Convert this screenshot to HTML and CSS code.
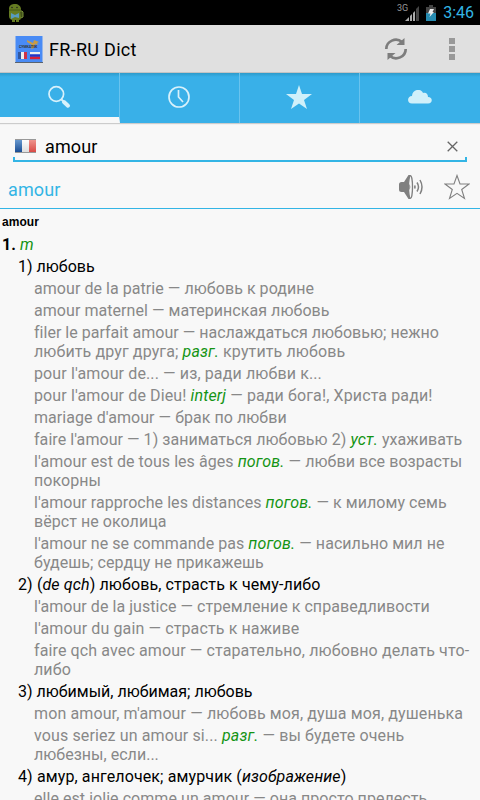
FILE: index.html
```
<!DOCTYPE html>
<html lang="ru">
<head>
<meta charset="utf-8">
<title>FR-RU Dict</title>
<link rel="stylesheet" href="styles.css">
</head>
<body>
<div class="status">
  <svg class="droid" width="16" height="20" viewBox="0 0 16 20"><path d="M1 6C1 2 4 1 7 1s6 2 6 5v9q0 2-2 2v2H8v-2H7v2H4v-2Q1 16 1 13Z" fill="#657b22"/><path d="M12 8h2l1 1v5l-2 1" fill="#405019" stroke="#78903a"/><path d="M1 7h12" stroke="#465817"/><circle cx="4" cy="4.500" r=".8" fill="#222"/><circle cx="9" cy="4.500" r=".8" fill="#222"/><path d="M3 10l4 2 4-2v5l-4-1-4 2Z" fill="#579bc0"/></svg>
  <div class="indicators">
    <span class="net">3G</span>
    <svg class="signal" width="14" height="16" viewBox="0 0 14 16"><path d="M0 16l4-4v4ZM5 11l2-2v7H5ZM8 8l2-2v10H8Z" fill="#aaa"/><path d="M11 4l3-3v15h-3Z" fill="#444"/></svg>
    <svg class="battery" width="10" height="16" viewBox="0 0 10 16"><path d="M3 0h4v2h3v6H0V2h3Z" fill="#444"/><path d="M0 8h10v8H0Z" fill="#278bb0"/><path d="M4 4h4L6.500 7H8L3.500 12 4.500 8.500H2Z" fill="#eee"/></svg>
    <span class="clock">3:46</span>
  </div>
</div>
<header class="bar">
  <svg class="logo" width="28" height="28" viewBox="0 0 28 28"><rect x=".5" width="27" height="27" fill="#498bf5"/><path d="M0 26.500h28" stroke="#59636f"/><path d="M12 4l6 3 1-3 5 2-2 1 1 2-3-1-1 4-3 1 1-4-5-3Z" fill="#c99b45"/><text x="4" y="12" class="logo-text">СУМКАТЕК</text><rect x="3" y="16" width="3" height="7" fill="#31579f"/><rect x="6" y="16" width="3" height="7" fill="#eee"/><rect x="9" y="16" width="3" height="7" fill="#cf3348"/><rect x="15" y="16" width="10" height="2.400" fill="#eee"/><rect x="15" y="18.400" width="10" height="2.400" fill="#2735c5"/><rect x="15" y="20.800" width="10" height="2.400" fill="#d62039"/></svg>
  <h1>FR-RU Dict</h1>
  <svg class="refresh" width="24" height="24" viewBox="0 0 24 24"><path d="M2.300 12C2.300 4 12 0 18 5M21.700 12C21.700 20 12 24 6 19" fill="none" stroke="#7d7d7d" stroke-width="2.700"/><path d="M20.500 1v7h-8ZM3.500 23v-7h8Z" fill="#7d7d7d"/></svg>
  <svg class="more" width="6" height="22" viewBox="0 0 6 22"><path d="M0 0h6v6H0ZM0 8h6v6H0ZM0 16h6v6H0Z" fill="#999"/></svg>
</header>
<nav class="tabs">
  <div class="tab active"><svg width="24" height="24" viewBox="0 0 24 24"><circle cx="9.300" cy="9" r="7.300" fill="none" stroke="#d8f1fb" stroke-width="1.700"/><path d="M14 14l3 3" stroke="#d8f1fb" stroke-width="2"/><path d="M17 17l4 3.700" stroke="#d8f1fb" stroke-width="4" stroke-linecap="round"/></svg></div>
  <div class="tab"><svg width="24" height="24" viewBox="0 0 24 24"><circle cx="12" cy="12" r="10" fill="none" stroke="#d8f1fb" stroke-width="1.700"/><path d="M11.500 5v7l4.500 5" fill="none" stroke="#d8f1fb" stroke-width="1.700"/></svg></div>
  <div class="tab"><svg width="26" height="26" viewBox="0 0 26 26"><path d="M13 1l3 9h10l-8 6 3 9-8-5.500L5 25l3-9-8-6h10Z" fill="#d0f0fa"/></svg></div>
  <div class="tab"><svg width="24" height="14" viewBox="0 0 24 14"><path d="M4 13.500C-1.500 13.500-1 6 4 6 4-1 13-2 15 3c3-1 5 1 5 4 5 0 5 6.500 0 6.500Z" fill="#d0f0fa"/></svg></div>
</nav>
<div class="search">
  <svg width="21" height="15" viewBox="0 0 21 15"><defs><linearGradient id="b" x2="0" y2="1"><stop stop-color="#6a9bd0"/><stop offset="1" stop-color="#184b92"/></linearGradient><linearGradient id="w" x2="0" y2="1"><stop stop-color="#fff"/><stop offset="1" stop-color="#ddd"/></linearGradient><linearGradient id="r" x2="0" y2="1"><stop stop-color="#ef9790"/><stop offset="1" stop-color="#d84844"/></linearGradient></defs><path d="M0 .5h7v13H0Z" fill="url(#b)"/><path d="M7 .5h7v13H7Z" fill="url(#w)"/><path d="M14 .5h7v13h-7Z" fill="url(#r)"/><path d="M0 .5h21M0 13.500h21" stroke="#999" fill="none"/></svg>
  <span class="query">amour</span>
  <svg class="clear" width="11" height="11" viewBox="0 0 11 11"><path d="M.7.700l9.600 9.600M10.300.7L.7 10.300" stroke="#666" stroke-width="1.300"/></svg>
</div>
<div class="word">
  <h2>amour</h2>
  <svg class="speaker" width="24" height="24" viewBox="0 0 24 24"><path d="M0 9.500q0-2.500 2.500-2.500H5l4.500-7h2v24h-2L5 17H2.500Q0 17 0 14.500Z" fill="#808080"/><ellipse cx="11.500" cy="12" rx="2" ry="11.300" fill="#f8f8f8" stroke="#808080" stroke-width="1.300"/><path d="M10.300 9q2 3 0 6Z" fill="#808080"/><path d="M15.500 10.500q1 1.500 0 3M18 7.500q3 4.500 0 9M21 5q4 7 0 14" fill="none" stroke="#808080" stroke-width="1.500"/></svg>
  <svg class="star" width="26" height="26" viewBox="0 0 26 26"><path d="M13 1.500l3 8.500h9l-7.300 5.500 2.800 9-7.500-5.200-7.500 5.200 2.800-9L1 10h9Z" fill="none" stroke="#808080" stroke-width="1.100"/></svg>
</div>
<main>
  <p class="head">amour</p>
  <p class="pos"><b>1.</b> <i class="tag">m</i></p>
  <p class="sense">1) любовь</p>
  <p class="ex">amour de la patrie — любовь к родине</p>
  <p class="ex">amour maternel — материнская любовь</p>
  <p class="ex"><span class="tight">filer le parfait amour — наслаждаться любовью; нежно</span><br><span class="wide">любить друг друга; <i class="tag">разг.</i> крутить любовь</span></p>
  <p class="ex wide">pour l'amour de... — из, ради любви к...</p>
  <p class="ex wide">pour l'amour de Dieu! <i class="tag">interj</i> — ради бога!, Христа ради!</p>
  <p class="ex">mariage d'amour — брак по любви</p>
  <p class="ex">faire l'amour — 1) заниматься любовью 2) <i class="tag">уст.</i> ухаживать</p>
  <p class="ex">l'amour est de tous les âges <i class="tag">погов.</i> — любви все возрасты<br>покорны</p>
  <p class="ex">l'amour rapproche les distances <i class="tag">погов.</i> — к милому семь<br>вёрст не околица</p>
  <p class="ex">l'amour ne se commande pas <i class="tag">погов.</i> — насильно мил не<br>будешь; сердцу не прикажешь</p>
  <p class="sense wide">2) (<i>de qch</i>) любовь, страсть к чему-либо</p>
  <p class="ex">l'amour de la justice — стремление к справедливости</p>
  <p class="ex wide">l'amour du gain — страсть к наживе</p>
  <p class="ex wide">faire qch avec amour — старательно, любовно делать что-<br>либо</p>
  <p class="sense">3) любимый, любимая; любовь</p>
  <p class="ex wide">mon amour, m'amour — любовь моя, душа моя, душенька</p>
  <p class="ex wide">vous seriez un amour si... <i class="tag">разг.</i> — вы будете очень<br><span class="tight">любезны, если...</span></p>
  <p class="sense wide">4) амур, ангелочек; амурчик (<i>изображение</i>)</p>
  <p class="ex">elle est jolie comme un amour — она просто прелесть</p>
</main>
</body>
</html>
```
FILE: styles.css
```
* { box-sizing: border-box; }
body { margin: 0; width: 480px; height: 800px; overflow: hidden; background: #f8f8f8; color: #000; font-family: Roboto, "Noto Sans", sans-serif; display: flex; flex-direction: column; }
svg { display: block; flex: none; }
h1, h2, p { margin: 0; font-weight: 400; }
.status { height: 25px; flex: none; background: #000; display: flex; align-items: center; justify-content: space-between; padding: 0 6px 0 8px; }
.indicators { display: flex; align-items: center; }
.net { color: #999; font-size: 9px; line-height: 10px; align-self: flex-start; padding-top: 3px; margin-right: -3px; }
.signal { margin-right: 7px; margin-top: 1px; }
.battery { margin-right: 7px; }
.clock { color: #33b5e5; font-size: 16px; line-height: 25px; }
.bar { height: 48px; flex: none; background: #e0e0e0; border-bottom: 1px solid #c4c4c4; display: flex; align-items: center; padding: 0 25px 0 15px; }
.logo { margin-top: 2px; }
.logo-text { font: bold 3.500px Roboto, sans-serif; fill: #333; }
.bar h1 { font-size: 18px; letter-spacing: .3px; margin: 2px 0 0 6px; flex: 1; }
.more { margin-left: 41px; }
.tabs { height: 50px; flex: none; display: grid; grid-template-columns: repeat(4, 1fr); background: linear-gradient(#2d9bcb 0, #39b0e8 4px); box-shadow: 0 1px 1px #ccc; }
.tab { display: flex; align-items: center; justify-content: center; border-right: 1px solid #69c3ee; padding: 0 2px 2px 0; }
.tab:last-child { border-right: 0; padding-right: 0; }
.active { border-bottom: 6px solid #f8f8f8; padding-bottom: 0; padding-top: 4px; }
.search { height: 37px; flex: none; margin: 2px 13px 0; display: flex; align-items: center; padding: 8px 9px 0 2px; border-bottom: 2px solid #33b5e5; position: relative; }
.search::before, .search::after { content: ""; position: absolute; bottom: 0; width: 2px; height: 3px; background: #33b5e5; }
.search::before { left: 0; }
.search::after { right: 0; }
.query { font-size: 18px; letter-spacing: .1px; margin-left: 9px; flex: 1; }
.word { height: 47px; flex: none; display: flex; align-items: center; padding: 4px 10px 0 8px; border-bottom: 1px solid #33b5e5; }
.word h2 { color: #33b5e5; font-size: 18px; flex: 1; padding-top: 5px; letter-spacing: .1px; }
.star { margin-left: 21px; }
main { flex: none; font-size: 16px; line-height: 19px; letter-spacing: .055px; white-space: nowrap; padding-top: 4px; }
main p { margin-bottom: 3px; }
main .head { font: bold 12px/19px "Liberation Sans", sans-serif; padding-left: 2px; }
.pos { padding-left: 2px; }
.sense { padding-left: 18px; letter-spacing: 0; }
.ex { padding-left: 34px; color: #888; }
.tag { color: #149414; letter-spacing: .15px; }
.wide { letter-spacing: .12px; }
.tight { letter-spacing: .02px; }
```
